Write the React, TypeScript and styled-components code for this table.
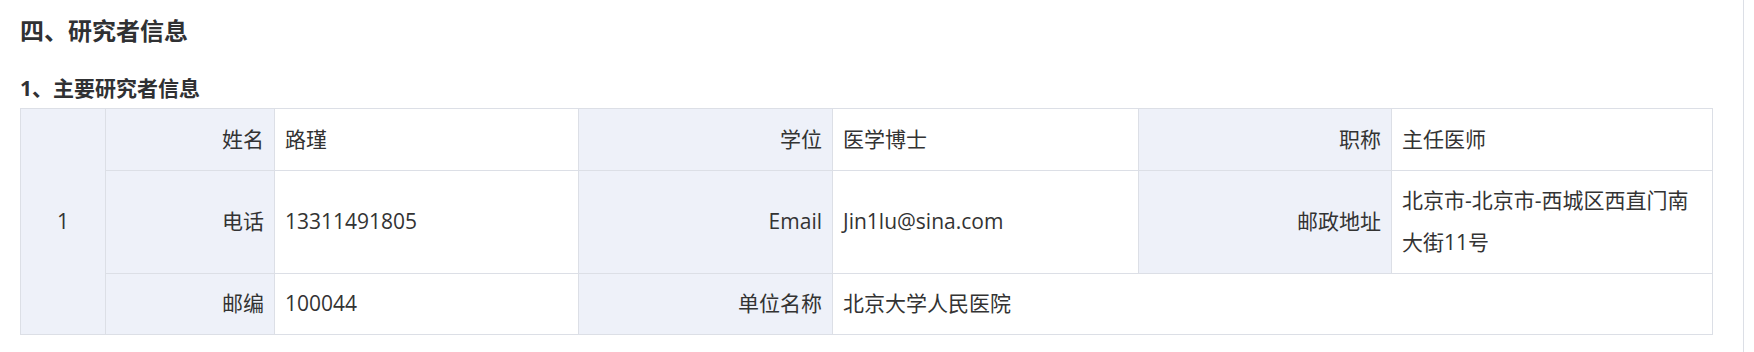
import React from "react";
import styled, { createGlobalStyle } from "styled-components";

const GlobalStyle = createGlobalStyle`
  html, body {
    margin: 0;
    padding: 0;
    background: #ffffff;
  }
  body {
    font-family: "Open Sans", "Noto Sans CJK SC", sans-serif;
    color: #333333;
  }
`;

const Page = styled.div`
  box-sizing: border-box;
  width: 1744px;
  min-height: 352px;
  padding: 15px 31px 0 20px;
  border-right: 1px solid #dcdfe6;
`;

const SectionTitle = styled.h3`
  margin: 0;
  font-size: 24px;
  line-height: 32px;
  font-weight: 700;
  color: #303133;
`;

const SubTitle = styled.h4`
  margin: 26px 0 5px;
  font-size: 21px;
  line-height: 30px;
  font-weight: 700;
  color: #303133;
`;

const InfoTable = styled.table`
  width: 100%;
  table-layout: fixed;
  border-collapse: collapse;
  font-size: 21px;
  line-height: 41.5px;
  color: #333333;
`;

const Cell = styled.td<{ $label?: boolean; $center?: boolean }>`
  border: 1px solid #dcdfe6;
  padding: 9.5px 10px;
  vertical-align: middle;
  text-align: ${(p) => (p.$center ? "center" : p.$label ? "right" : "left")};
  background: ${(p) => (p.$label ? "#eef1f9" : "#ffffff")};
  word-break: break-all;
`;

const widths = [85, 169, 304, 254, 306, 253, 321];

type Pair = { label: string; value: string; span?: number };

const rows: Pair[][] = [
  [
    { label: "姓名", value: "路瑾" },
    { label: "学位", value: "医学博士" },
    { label: "职称", value: "主任医师" },
  ],
  [
    { label: "电话", value: "13311491805" },
    { label: "Email", value: "Jin1lu@sina.com" },
    { label: "邮政地址", value: "北京市-北京市-西城区西直门南大街11号" },
  ],
  [
    { label: "邮编", value: "100044" },
    { label: "单位名称", value: "北京大学人民医院", span: 3 },
  ],
];

export default function App() {
  return (
    <>
      <GlobalStyle />
      <Page>
        <SectionTitle>四、研究者信息</SectionTitle>
        <SubTitle>1、主要研究者信息</SubTitle>
        <InfoTable>
          <colgroup>
            {widths.map((w, i) => (
              <col key={i} style={{ width: w }} />
            ))}
          </colgroup>
          <tbody>
            {rows.map((row, ri) => (
              <tr key={ri}>
                {ri === 0 && (
                  <Cell $label $center rowSpan={rows.length}>
                    1
                  </Cell>
                )}
                {row.map((pair) => (
                  <React.Fragment key={pair.label}>
                    <Cell $label>{pair.label}</Cell>
                    <Cell colSpan={pair.span}>{pair.value}</Cell>
                  </React.Fragment>
                ))}
              </tr>
            ))}
          </tbody>
        </InfoTable>
      </Page>
    </>
  );
}
